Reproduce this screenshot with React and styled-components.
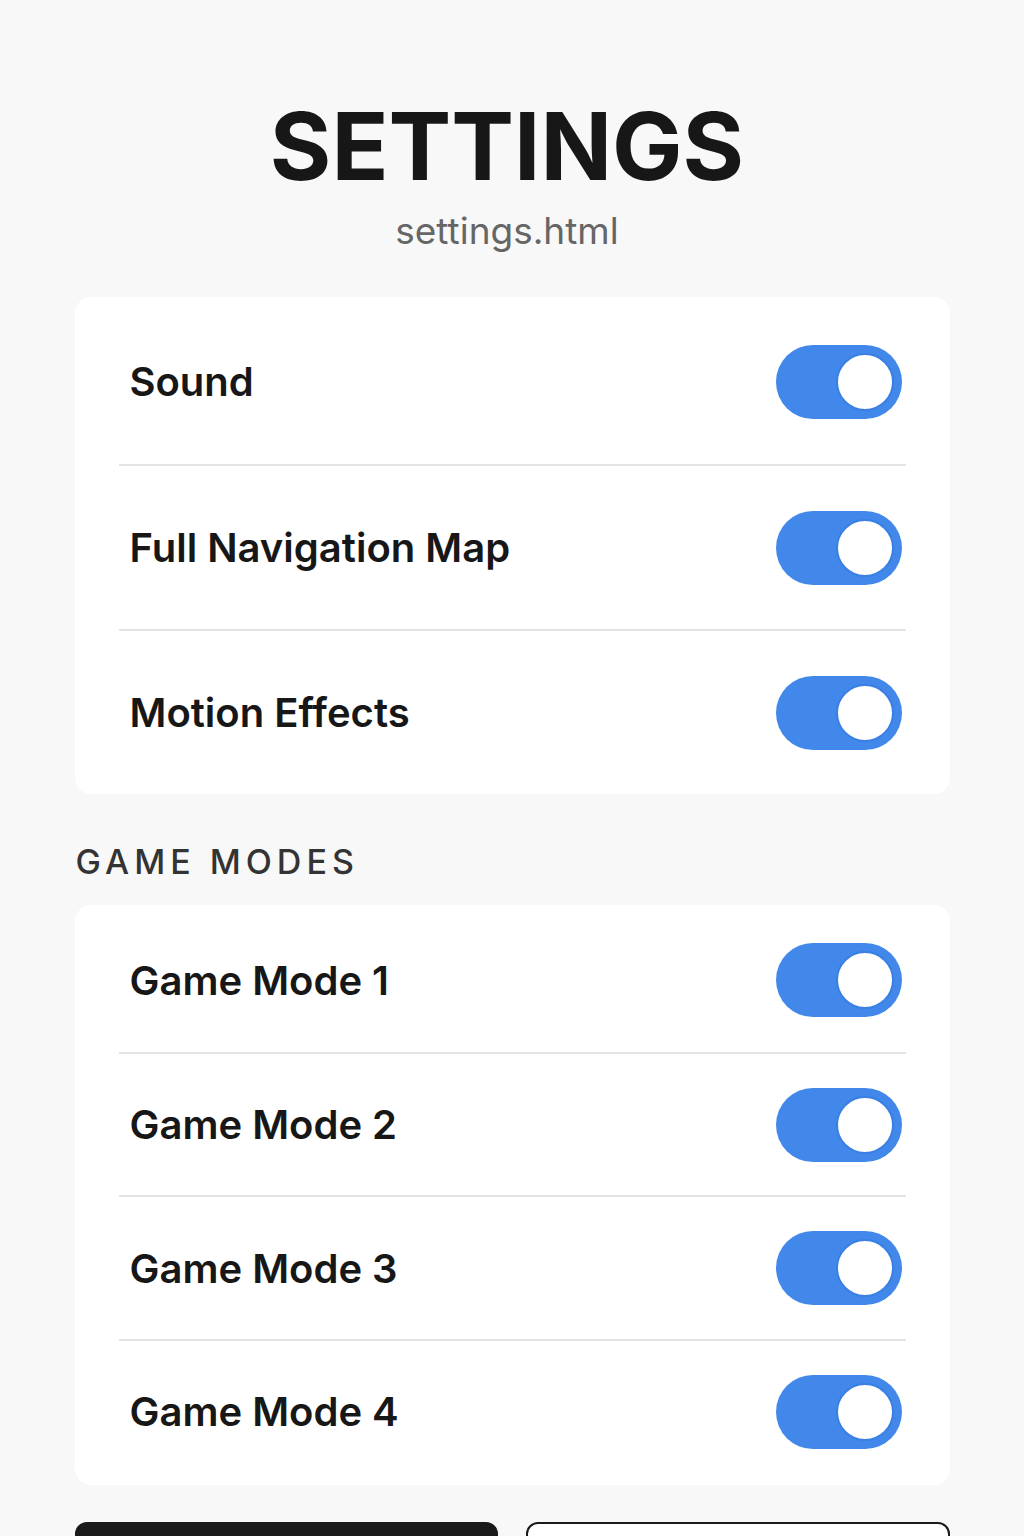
import React from "react"
import styled, { createGlobalStyle } from "styled-components"

const GlobalStyle = createGlobalStyle`
  html, body {
    margin: 0;
    padding: 0;
    background: #f8f8f8;
    font-family: Inter, "Noto Sans", "Liberation Sans", sans-serif;
    color: #161616;
  }
`

const Page = styled.main`
  width: 875px;
  margin: 0 auto;
  padding: 99px 0 40px 0;
  display: flex;
  flex-direction: column;
`

const Header = styled.header`
  display: flex;
  flex-direction: column;
  align-items: center;
  padding-right: 10px;
  margin-bottom: 44px;
`

const Title = styled.h1`
  margin: 0;
  font-size: 94px;
  line-height: 1;
  font-weight: 700;
  color: #171717;
`

const Subtitle = styled.div`
  margin-top: 16px;
  font-size: 37px;
  line-height: 1.2;
  color: #666;
`

const Card = styled.section`
  background: #fff;
  border-radius: 16px;
  padding: ${p => p.$pad};
  display: flex;
  flex-direction: column;
`

const Row = styled.div`
  height: ${p => p.$h}px;
  margin: 0 44px;
  padding: 0 4px 0 11px;
  display: flex;
  align-items: center;
  justify-content: space-between;
  box-sizing: border-box;
  & + & {
    border-top: 2px solid #e4e4e4;
  }
`

const Label = styled.span`
  font-size: 40px;
  font-weight: 600;
  color: #171717;
`

const Track = styled.button`
  width: 126px;
  height: 74px;
  border: none;
  border-radius: 37px;
  background: ${p => (p.$on ? "#4287ea" : "#d5d5d5")};
  display: flex;
  align-items: center;
  justify-content: ${p => (p.$on ? "flex-end" : "flex-start")};
  padding: 0 8px;
  cursor: pointer;
`

const Knob = styled.span`
  width: 58px;
  height: 58px;
  border-radius: 50%;
  background: #fff;
  box-sizing: border-box;
  border: 2px solid #3a7fe3;
`

const SectionTitle = styled.h2`
  margin: 51px 0 26px 1px;
  font-size: 34px;
  line-height: 1;
  font-weight: 500;
  letter-spacing: 5px;
  color: #333;
`

const Actions = styled.div`
  margin-top: 37px;
  display: grid;
  grid-template-columns: 1fr 1fr;
  gap: 28px;
`

const Button = styled.button`
  height: 68px;
  border-radius: 12px;
  background: ${p => (p.$primary ? "#1a1a1a" : "#fff")};
  border: 2px solid #1a1a1a;
  cursor: pointer;
`

const Toggle = ({ on }) => (
  <Track $on={on} aria-pressed={on}>
    <Knob />
  </Track>
)

const general = ["Sound", "Full Navigation Map", "Motion Effects"]
const modes = ["Game Mode 1", "Game Mode 2", "Game Mode 3", "Game Mode 4"]

export default function App() {
  return (
    <>
      <GlobalStyle />
      <Page>
        <Header>
          <Title>SETTINGS</Title>
          <Subtitle>settings.html</Subtitle>
        </Header>
        <Card $pad="2px 0 0 0">
          {general.map(name => (
            <Row key={name} $h={165}>
              <Label>{name}</Label>
              <Toggle on />
            </Row>
          ))}
        </Card>
        <SectionTitle>GAME MODES</SectionTitle>
        <Card $pad="3px 0">
          {modes.map(name => (
            <Row key={name} $h={143.5}>
              <Label>{name}</Label>
              <Toggle on />
            </Row>
          ))}
        </Card>
        <Actions>
          <Button $primary aria-label="Save" />
          <Button aria-label="Reset" />
        </Actions>
      </Page>
    </>
  )
}
